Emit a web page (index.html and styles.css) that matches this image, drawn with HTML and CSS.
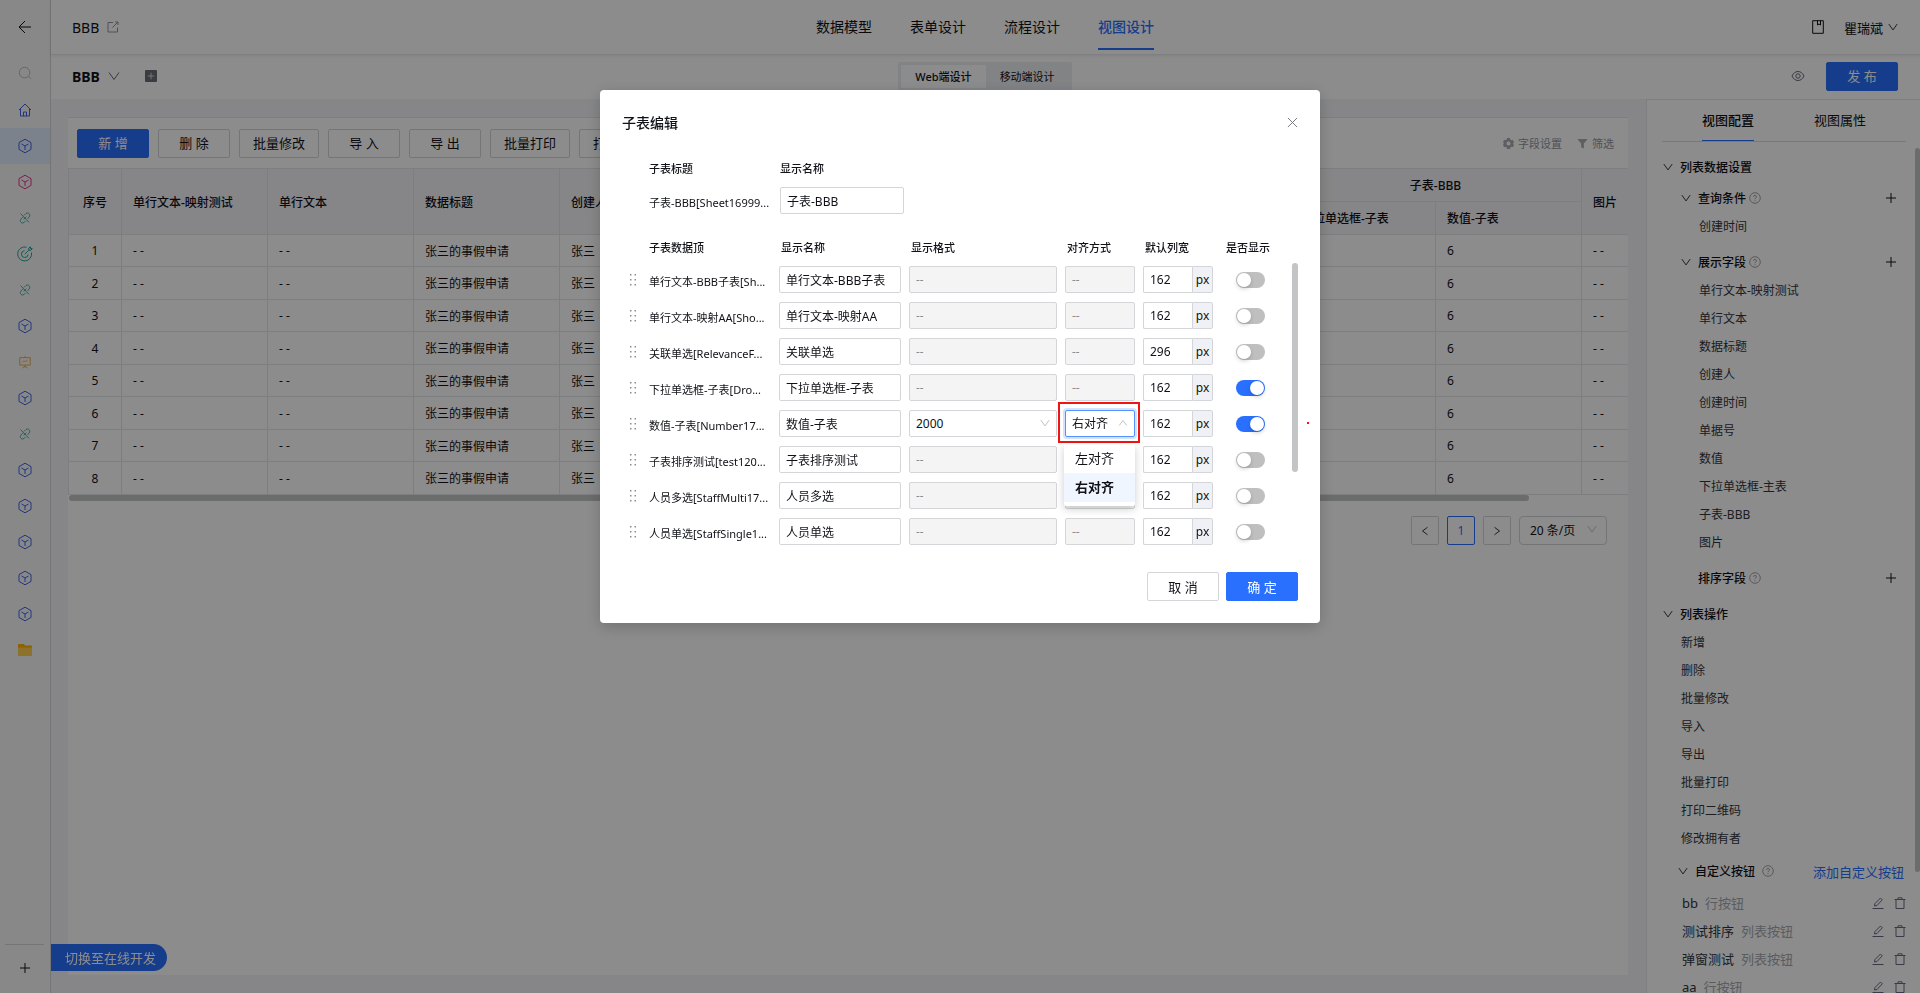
FILE: index.html
```html
<!DOCTYPE html>
<html lang="zh-CN">
<head>
    <meta charset="UTF-8">
    <meta name="viewport" content="width=device-width, initial-scale=1.0">
    <title>视图设计</title>
    <link rel="stylesheet" href="styles.css">
</head>
<body>
    <svg class="sprite" aria-hidden="true">
        <symbol id="i-back" viewBox="0 0 16 16"><path d="M14 8H2M8 2L2 8l6 6"/></symbol>
        <symbol id="i-search" viewBox="0 0 16 16"><circle cx="7.5" cy="7.5" r="6"/><path d="M12 12l3 2.5"/></symbol>
        <symbol id="i-home" viewBox="0 0 16 16"><path d="M2 8l6-6 6 6M3.500 7v7h9V7M6.500 14V10h3v4"/></symbol>
        <symbol id="i-cube" viewBox="0 0 16 16"><path d="M8 1.200l6 3.400v6.800l-6 3.400-6-3.400V4.600zM4.500 6L8 8l3.500-2M8 8v4"/></symbol>
        <symbol id="i-link" viewBox="0 0 16 16"><path d="M3 3l9.500 10M9.500 6.500L6.500 9.500M7 5l2-2c2.500-2 5.500.500 4 3.500L11 9M5.500 7L3.500 9C1 12 4.500 15 7 13l1.500-1.500"/></symbol>
        <symbol id="i-target" viewBox="0 0 16 16"><path d="M14.500 6.500A7 7 0 1 1 9.500 1.200M11.200 8.500A3.400 3.400 0 1 1 7.500 4.700M7.800 8.200l4-4M11.800 4.200V2L13.500.800V2.500H15.200L14 4.200z"/></symbol>
        <symbol id="i-board" viewBox="0 0 16 16"><path d="M2 3h12v8.500H2zM8 1v2M8 11.500V14M5 15l3-2 3 2M5 8.500l2-2 1.500 1.500L11 5.500"/></symbol>
        <symbol id="i-down" viewBox="0 0 12 12"><path d="M1 2.500l5 7 5-7"/></symbol>
        <symbol id="i-up" viewBox="0 0 12 12"><path d="M1.500 9L6 3l4.500 6"/></symbol>
        <symbol id="i-plus" viewBox="0 0 12 12"><path d="M6 1v10M1 6h10"/></symbol>
        <symbol id="i-help" viewBox="0 0 12 12"><circle cx="6" cy="6" r="5.300"/><path d="M4.500 4.800C4.500 3 7.500 3 7.500 4.800 7.500 6 6 5.800 6 7.200M6 8.300v1"/></symbol>
        <symbol id="i-edit" viewBox="0 0 12 12"><path d="M2.500 9l.5-2.500L8.500 1l1.800 1.800L5 8.500zM.500 11.500h11"/></symbol>
        <symbol id="i-trash" viewBox="0 0 12 12"><path d="M.500 2.500h11M4 2.500V.800h4v1.700M2 2.500v9h8v-9"/></symbol>
        <symbol id="i-drag" viewBox="0 0 8 14"><path d="M1 1h1.500v1.500H1zM5.500 1H7v1.500H5.500zM1 6h1.500v1.500H1zM5.500 6H7v1.500H5.500zM1 11h1.500v1.500H1zM5.500 11H7v1.500H5.500z"/></symbol>
    </svg>

    <nav class="sidebar">
        <a href="#" aria-label="返回" class="back"><svg class="icon"><use href="#i-back"/></svg></a>
        <a href="#" aria-label="搜索" class="search"><svg class="icon small"><use href="#i-search"/></svg></a>
        <a href="#" aria-label="首页"><svg class="icon"><use href="#i-home"/></svg></a>
        <a href="#" aria-label="表单" class="active"><svg class="icon"><use href="#i-cube"/></svg></a>
        <a href="#" aria-label="表单" class="pink"><svg class="icon"><use href="#i-cube"/></svg></a>
        <a href="#" aria-label="链接" class="teal"><svg class="icon small"><use href="#i-link"/></svg></a>
        <a href="#" aria-label="目标" class="teal"><svg class="icon"><use href="#i-target"/></svg></a>
        <a href="#" aria-label="链接" class="teal"><svg class="icon small"><use href="#i-link"/></svg></a>
        <a href="#" aria-label="表单"><svg class="icon"><use href="#i-cube"/></svg></a>
        <a href="#" aria-label="报表" class="orange"><svg class="icon small"><use href="#i-board"/></svg></a>
        <a href="#" aria-label="表单"><svg class="icon"><use href="#i-cube"/></svg></a>
        <a href="#" aria-label="链接" class="teal"><svg class="icon small"><use href="#i-link"/></svg></a>
        <a href="#" aria-label="表单"><svg class="icon"><use href="#i-cube"/></svg></a>
        <a href="#" aria-label="表单"><svg class="icon"><use href="#i-cube"/></svg></a>
        <a href="#" aria-label="表单"><svg class="icon"><use href="#i-cube"/></svg></a>
        <a href="#" aria-label="表单"><svg class="icon"><use href="#i-cube"/></svg></a>
        <a href="#" aria-label="表单"><svg class="icon"><use href="#i-cube"/></svg></a>
        <a href="#" aria-label="文件夹">
            <svg class="folder" viewBox="0 0 14 12"><path fill="#ffb400" d="M0 1a1 1 0 0 1 1-1h5l1 1.500h6a1 1 0 0 1 1 1V6H0z"/><path fill="#ffd04d" d="M0 3.500h14V11a1 1 0 0 1-1 1H1a1 1 0 0 1-1-1z"/></svg>
        </a>
        <button type="button" class="add-app" aria-label="添加"><svg class="icon"><use href="#i-plus"/></svg></button>
    </nav>

    <div class="page">
        <header class="topbar">
            <div class="app-name">BBB
                <svg class="ext" viewBox="0 0 12 12"><path d="M6 1.500H1v9.500h9.500V6.500M8 1h3v3M11 1L5.500 6.500"/></svg>
            </div>
            <nav class="main-nav">
                <a href="#">数据模型</a>
                <a href="#">表单设计</a>
                <a href="#">流程设计</a>
                <a href="#" class="active">视图设计</a>
            </nav>
            <div class="user">
                <svg class="book" viewBox="0 0 12 14"><path d="M.700.700h10.600v12.600H.700zM5.500.700V5L7 4l1.500 1V.700"/></svg>
                <span>瞿瑞斌</span>
                <svg class="chev"><use href="#i-down"/></svg>
            </div>
        </header>

        <div class="subbar">
            <div class="view-name">BBB
                <svg class="chev large"><use href="#i-down"/></svg>
                <button type="button" class="add-view" aria-label="新建视图"><svg><use href="#i-plus"/></svg></button>
            </div>
            <div class="segment">
                <button type="button" class="active">Web端设计</button>
                <button type="button">移动端设计</button>
            </div>
            <div class="sub-actions">
                <svg class="eye" viewBox="0 0 14 12"><path d="M1 6c2.500-6 9.500-6 12 0-2.500 6-9.500 6-12 0z"/><circle cx="7" cy="6" r="2.200"/></svg>
                <button type="button" class="btn primary">发 布</button>
            </div>
        </div>

        <div class="content">
            <main class="canvas">
                <div class="toolbar">
                    <button type="button" class="btn primary">新 增</button>
                    <button type="button" class="btn">删 除</button>
                    <button type="button" class="btn">批量修改</button>
                    <button type="button" class="btn">导 入</button>
                    <button type="button" class="btn">导 出</button>
                    <button type="button" class="btn">批量打印</button>
                    <button type="button" class="btn">打印二维码</button>
                    <div class="tools">
                        <a href="#"><svg viewBox="0 0 12 12"><path fill-rule="evenodd" d="M4.500 0h3l.5 1.700 1.200.7 1.500-.4L12 4.500 11 6l1 1.500-1.300 2.500-1.500-.4-1.200.7L7.500 12h-3L4 10.300l-1.200-.7-1.500.4L0 7.500 1 6 0 4.500 1.300 2l1.500.4L4 1.700zM6 3.800a2.200 2.200 0 1 0 0 4.400 2.200 2.200 0 0 0 0-4.400z"/></svg>字段设置</a>
                        <a href="#"><svg viewBox="0 0 12 12"><path d="M1 1h10v1L7.500 6v5.500l-3-1.500V6L1 2z"/></svg>筛选</a>
                    </div>
                </div>

                <div class="table-wrap">
                    <table>
                        <colgroup>
                            <col class="col-no">
                            <col span="11">
                        </colgroup>
                        <thead>
                            <tr>
                                <th rowspan="2" class="no">序号</th>
                                <th rowspan="2">单行文本-映射测试</th>
                                <th rowspan="2">单行文本</th>
                                <th rowspan="2">数据标题</th>
                                <th rowspan="2">创建人</th>
                                <th rowspan="2"></th>
                                <th rowspan="2"></th>
                                <th rowspan="2"></th>
                                <th rowspan="2"></th>
                                <th colspan="2" class="group">子表-BBB</th>
                                <th rowspan="2">图片</th>
                            </tr>
                            <tr>
                                <th>下拉单选框-子表</th>
                                <th>数值-子表</th>
                            </tr>
                        </thead>
                        <tbody>
                            <tr><td class="no">1</td><td>- -</td><td>- -</td><td>张三的事假申请</td><td>张三</td><td></td><td></td><td></td><td></td><td></td><td>6</td><td>- -</td></tr>
                            <tr><td class="no">2</td><td>- -</td><td>- -</td><td>张三的事假申请</td><td>张三</td><td></td><td></td><td></td><td></td><td></td><td>6</td><td>- -</td></tr>
                            <tr><td class="no">3</td><td>- -</td><td>- -</td><td>张三的事假申请</td><td>张三</td><td></td><td></td><td></td><td></td><td></td><td>6</td><td>- -</td></tr>
                            <tr><td class="no">4</td><td>- -</td><td>- -</td><td>张三的事假申请</td><td>张三</td><td></td><td></td><td></td><td></td><td></td><td>6</td><td>- -</td></tr>
                            <tr><td class="no">5</td><td>- -</td><td>- -</td><td>张三的事假申请</td><td>张三</td><td></td><td></td><td></td><td></td><td></td><td>6</td><td>- -</td></tr>
                            <tr><td class="no">6</td><td>- -</td><td>- -</td><td>张三的事假申请</td><td>张三</td><td></td><td></td><td></td><td></td><td></td><td>6</td><td>- -</td></tr>
                            <tr><td class="no">7</td><td>- -</td><td>- -</td><td>张三的事假申请</td><td>张三</td><td></td><td></td><td></td><td></td><td></td><td>6</td><td>- -</td></tr>
                            <tr><td class="no">8</td><td>- -</td><td>- -</td><td>张三的事假申请</td><td>张三</td><td></td><td></td><td></td><td></td><td></td><td>6</td><td>- -</td></tr>
                        </tbody>
                    </table>
                </div>
                <div class="h-scroll"></div>

                <div class="pagination">
                    <button type="button" aria-label="上一页"><svg viewBox="0 0 12 12"><path d="M9 1.500L3 6l6 4.500"/></svg></button>
                    <button type="button" class="active">1</button>
                    <button type="button" aria-label="下一页"><svg viewBox="0 0 12 12"><path d="M3 1.500L9 6l-6 4.500"/></svg></button>
                    <div class="select-box page-size">
                        <select aria-label="每页条数"><option>20 条/页</option></select>
                        <svg><use href="#i-down"/></svg>
                    </div>
                </div>
            </main>

            <aside class="config">
                <div class="config-tabs">
                    <a href="#" class="active">视图配置</a>
                    <a href="#">视图属性</a>
                </div>
                <div class="config-body">
                    <h3><svg class="chev"><use href="#i-down"/></svg>列表数据设置</h3>
                    <section class="nested">
                        <h4><svg class="chev"><use href="#i-down"/></svg>查询条件<svg class="help"><use href="#i-help"/></svg><button type="button" aria-label="添加查询条件"><svg><use href="#i-plus"/></svg></button></h4>
                        <ul>
                            <li>创建时间</li>
                        </ul>
                        <h4><svg class="chev"><use href="#i-down"/></svg>展示字段<svg class="help"><use href="#i-help"/></svg><button type="button" aria-label="添加展示字段"><svg><use href="#i-plus"/></svg></button></h4>
                        <ul>
                            <li>单行文本-映射测试</li>
                            <li>单行文本</li>
                            <li>数据标题</li>
                            <li>创建人</li>
                            <li>创建时间</li>
                            <li>单据号</li>
                            <li>数值</li>
                            <li>下拉单选框-主表</li>
                            <li>子表-BBB</li>
                            <li>图片</li>
                        </ul>
                        <h4 class="plain">排序字段<svg class="help"><use href="#i-help"/></svg><button type="button" aria-label="添加排序字段"><svg><use href="#i-plus"/></svg></button></h4>
                    </section>
                    <h3><svg class="chev"><use href="#i-down"/></svg>列表操作</h3>
                    <ul class="actions">
                        <li>新增</li>
                        <li>删除</li>
                        <li>批量修改</li>
                        <li>导入</li>
                        <li>导出</li>
                        <li>批量打印</li>
                        <li>打印二维码</li>
                        <li>修改拥有者</li>
                    </ul>
                    <h4 class="custom"><svg class="chev"><use href="#i-down"/></svg>自定义按钮<svg class="help"><use href="#i-help"/></svg><a href="#">添加自定义按钮</a></h4>
                    <ul class="custom-list">
                        <li>bb <em>行按钮</em><button type="button" aria-label="编辑"><svg><use href="#i-edit"/></svg></button><button type="button" aria-label="删除"><svg><use href="#i-trash"/></svg></button></li>
                        <li>测试排序 <em>列表按钮</em><button type="button" aria-label="编辑"><svg><use href="#i-edit"/></svg></button><button type="button" aria-label="删除"><svg><use href="#i-trash"/></svg></button></li>
                        <li>弹窗测试 <em>列表按钮</em><button type="button" aria-label="编辑"><svg><use href="#i-edit"/></svg></button><button type="button" aria-label="删除"><svg><use href="#i-trash"/></svg></button></li>
                        <li>aa <em>行按钮</em><button type="button" aria-label="编辑"><svg><use href="#i-edit"/></svg></button><button type="button" aria-label="删除"><svg><use href="#i-trash"/></svg></button></li>
                    </ul>
                </div>
                <div class="config-scroll"></div>
            </aside>
        </div>
    </div>

    <button type="button" class="switch-dev">切换至在线开发</button>

    <div class="mask">
        <div class="modal" role="dialog" aria-labelledby="modal-title">
            <div class="modal-head">
                <h2 id="modal-title">子表编辑</h2>
                <button type="button" class="close" aria-label="关闭"><svg viewBox="0 0 12 12"><path d="M1 1l10 10M11 1L1 11"/></svg></button>
            </div>

            <div class="sheet-title">
                <span class="head">子表标题</span>
                <span class="head">显示名称</span>
                <label for="sheet-name">子表-BBB[Sheet16999...</label>
                <input type="text" id="sheet-name" value="子表-BBB">
            </div>

            <div class="fields">
                <div class="field-list">
                    <div class="row head-row">
                        <span></span>
                        <span>子表数据顶</span>
                        <span>显示名称</span>
                        <span>显示格式</span>
                        <span>对齐方式</span>
                        <span>默认列宽</span>
                        <span>是否显示</span>
                    </div>
                    <div class="row">
                        <svg class="drag"><use href="#i-drag"/></svg>
                        <label for="f1">单行文本-BBB子表[Sh...</label>
                        <input type="text" id="f1" value="单行文本-BBB子表">
                        <input type="text" value="--" aria-label="显示格式" disabled>
                        <input type="text" value="--" aria-label="对齐方式" disabled>
                        <div class="width-box"><input type="text" value="162" aria-label="默认列宽"><span>px</span></div>
                        <input type="checkbox" class="switch" aria-label="是否显示">
                    </div>
                    <div class="row">
                        <svg class="drag"><use href="#i-drag"/></svg>
                        <label for="f2">单行文本-映射AA[Sho...</label>
                        <input type="text" id="f2" value="单行文本-映射AA">
                        <input type="text" value="--" aria-label="显示格式" disabled>
                        <input type="text" value="--" aria-label="对齐方式" disabled>
                        <div class="width-box"><input type="text" value="162" aria-label="默认列宽"><span>px</span></div>
                        <input type="checkbox" class="switch" aria-label="是否显示">
                    </div>
                    <div class="row">
                        <svg class="drag"><use href="#i-drag"/></svg>
                        <label for="f3">关联单选[RelevanceF...</label>
                        <input type="text" id="f3" value="关联单选">
                        <input type="text" value="--" aria-label="显示格式" disabled>
                        <input type="text" value="--" aria-label="对齐方式" disabled>
                        <div class="width-box"><input type="text" value="296" aria-label="默认列宽"><span>px</span></div>
                        <input type="checkbox" class="switch" aria-label="是否显示">
                    </div>
                    <div class="row">
                        <svg class="drag"><use href="#i-drag"/></svg>
                        <label for="f4">下拉单选框-子表[Dro...</label>
                        <input type="text" id="f4" value="下拉单选框-子表">
                        <input type="text" value="--" aria-label="显示格式" disabled>
                        <input type="text" value="--" aria-label="对齐方式" disabled>
                        <div class="width-box"><input type="text" value="162" aria-label="默认列宽"><span>px</span></div>
                        <input type="checkbox" class="switch" aria-label="是否显示" checked>
                    </div>
                    <div class="row">
                        <svg class="drag"><use href="#i-drag"/></svg>
                        <label for="f5">数值-子表[Number17...</label>
                        <input type="text" id="f5" value="数值-子表">
                        <div class="select-box">
                            <select aria-label="显示格式"><option>2000</option></select>
                            <svg><use href="#i-down"/></svg>
                        </div>
                        <div class="select-box open">
                            <select aria-label="对齐方式"><option>右对齐</option></select>
                            <svg><use href="#i-up"/></svg>
                            <span class="mark"></span>
                            <ul class="dropdown">
                                <li>左对齐</li>
                                <li class="selected">右对齐</li>
                            </ul>
                        </div>
                        <div class="width-box"><input type="text" value="162" aria-label="默认列宽"><span>px</span></div>
                        <input type="checkbox" class="switch" aria-label="是否显示" checked>
                    </div>
                    <div class="row">
                        <svg class="drag"><use href="#i-drag"/></svg>
                        <label for="f6">子表排序测试[test120...</label>
                        <input type="text" id="f6" value="子表排序测试">
                        <input type="text" value="--" aria-label="显示格式" disabled>
                        <input type="text" value="" aria-label="对齐方式" disabled>
                        <div class="width-box"><input type="text" value="162" aria-label="默认列宽"><span>px</span></div>
                        <input type="checkbox" class="switch" aria-label="是否显示">
                    </div>
                    <div class="row">
                        <svg class="drag"><use href="#i-drag"/></svg>
                        <label for="f7">人员多选[StaffMulti17...</label>
                        <input type="text" id="f7" value="人员多选">
                        <input type="text" value="--" aria-label="显示格式" disabled>
                        <input type="text" value="" aria-label="对齐方式" disabled>
                        <div class="width-box"><input type="text" value="162" aria-label="默认列宽"><span>px</span></div>
                        <input type="checkbox" class="switch" aria-label="是否显示">
                    </div>
                    <div class="row">
                        <svg class="drag"><use href="#i-drag"/></svg>
                        <label for="f8">人员单选[StaffSingle1...</label>
                        <input type="text" id="f8" value="人员单选">
                        <input type="text" value="--" aria-label="显示格式" disabled>
                        <input type="text" value="--" aria-label="对齐方式" disabled>
                        <div class="width-box"><input type="text" value="162" aria-label="默认列宽"><span>px</span></div>
                        <input type="checkbox" class="switch" aria-label="是否显示">
                    </div>
                </div>
                <div class="v-scroll"></div>
            </div>

            <div class="modal-foot">
                <button type="button" class="btn">取 消</button>
                <button type="button" class="btn primary">确 定</button>
            </div>
            <span class="dot"></span>
        </div>
    </div>
</body>
</html>
```
FILE: styles.css
```css
* {
    box-sizing: border-box;
}

body {
    margin: 0;
    height: 100vh;
    display: flex;
    overflow: hidden;
    font-family: "Noto Sans", "Noto Sans CJK SC", sans-serif;
    font-size: 12px;
    color: #111218;
    background: #f4f5f8;
}

a {
    color: inherit;
    text-decoration: none;
}

ul, h2, h3, h4 {
    margin: 0;
    padding: 0;
    list-style: none;
}

button, input, select {
    font-family: inherit;
    font-size: inherit;
    color: inherit;
    margin: 0;
}

button {
    padding: 0;
    border: none;
    background: none;
    cursor: pointer;
}

svg {
    flex: none;
    width: 12px;
    height: 12px;
    fill: none;
    stroke: currentColor;
}

.sprite {
    position: absolute;
    width: 0;
    height: 0;
}

.icon {
    width: 16px;
    height: 16px;
}

.icon.small {
    width: 14px;
    height: 14px;
}

.btn {
    min-width: 72px;
    height: 29px;
    padding: 0 13px;
    border: 1px solid #d4d5d9;
    border-radius: 2px;
    background: white;
    font-size: 13px;
    line-height: 26px;
    white-space: nowrap;
}

.btn.primary {
    background: #2970ff;
    border-color: #2970ff;
    color: white;
}

/* left icon bar */
.sidebar {
    flex: none;
    display: flex;
    flex-direction: column;
    width: 51px;
    border-right: 1px solid #d4d5d9;
    background: #f7f7f8;
    color: #4262e8;
}

.sidebar a {
    display: flex;
    flex: none;
    align-items: center;
    justify-content: center;
    height: 36px;
}

.sidebar .back {
    height: 54px;
    color: #111218;
}

.sidebar .search {
    height: 38px;
    color: #b0b2b8;
}

.sidebar .active {
    background: #e2edff;
}

.sidebar .pink {
    color: #e8368c;
}

.sidebar .teal {
    color: #2aa79b;
}

.sidebar .orange {
    color: #efa23a;
}

.folder {
    width: 14px;
    height: 12px;
    stroke: none;
}

.add-app {
    height: 49px;
    margin: auto 6px 0 5px;
    border-top: 1px solid #d4d5d9;
    color: #111218;
}

.add-app svg {
    width: 12px;
    height: 12px;
}

/* header */
.page {
    flex: 1;
    min-width: 0;
    display: flex;
    flex-direction: column;
}

.topbar, .subbar {
    flex: none;
    display: grid;
    grid-template-columns: 1fr auto 1fr;
    align-items: center;
    padding: 0 22px 0 21px;
    background: white;
}

.topbar {
    height: 55px;
    border-bottom: 1px solid #e6e7ea;
    box-shadow: 0 1px 3px rgba(0, 0, 0, 0.08);
    z-index: 1;
}

.app-name, .view-name {
    display: flex;
    align-items: center;
    gap: 8px;
    font-size: 14px;
}

.ext {
    color: #92959e;
}

.main-nav {
    display: flex;
    gap: 38px;
    height: 54px;
    font-size: 14px;
}

.main-nav a {
    height: 50px;
    line-height: 54px;
}

.main-nav .active {
    color: #2970ff;
    font-weight: 500;
    border-bottom: 2px solid #2970ff;
}

.user, .sub-actions {
    display: flex;
    align-items: center;
    justify-content: flex-end;
    gap: 5px;
    font-size: 13px;
}

.user .book {
    height: 14px;
    margin-right: 15px;
}

.chev {
    width: 10px;
    height: 10px;
}

.chev.large {
    width: 12px;
    height: 12px;
    color: #686b75;
}

.subbar {
    height: 44px;
    padding-bottom: 2px;
}

.view-name {
    font-weight: 700;
}

.add-view {
    display: flex;
    width: 12px;
    height: 12px;
    margin-left: 17px;
    border-radius: 1px;
    background: #6b6e78;
    color: white;
}

.add-view svg {
    padding: 2px;
}

.segment {
    display: flex;
    padding: 3px;
    border-radius: 2px;
    background: #eceef3;
    font-size: 11px;
}

.segment button {
    height: 23px;
    padding: 0 14px;
}

.segment .active {
    background: white;
    font-weight: 500;
}

.eye {
    width: 14px;
    margin-right: 16px;
    color: #686b75;
}

/* page canvas */
.content {
    flex: 1;
    min-height: 0;
    display: flex;
}

.canvas {
    flex: 1;
    min-width: 0;
    margin: 18px 18px 18px 17px;
    border-top: 1px solid #e4e5e8;
    background: white;
}

.toolbar {
    display: flex;
    align-items: center;
    gap: 9px;
    height: 50px;
    padding: 0 14px 0 9px;
}

.tools {
    display: flex;
    gap: 15px;
    margin-left: auto;
    font-size: 11px;
    color: #92959e;
}

.tools a {
    display: flex;
    align-items: center;
    gap: 4px;
}

.tools svg {
    width: 11px;
    height: 11px;
    fill: #abadb3;
    stroke: none;
}

.table-wrap {
    overflow: hidden;
}

table {
    width: 1659px;
    table-layout: fixed;
    border-collapse: collapse;
}

col {
    width: 146px;
}

.col-no {
    width: 53px;
}

th, td {
    height: 33px;
    padding: 0 11px;
    border: 1px solid #e4e5e8;
    text-align: left;
    white-space: nowrap;
}

tbody tr:nth-child(odd) td {
    height: 32px;
}

th {
    background: #f5f5f8;
    font-weight: 500;
}

.no, .group {
    text-align: center;
}

.h-scroll {
    height: 6px;
    margin: 0 99px 0 1px;
    border-radius: 3px;
    background: #c3c6c5;
}

.pagination {
    display: flex;
    justify-content: flex-end;
    gap: 8px;
    padding: 15px 21px 0 0;
}

.pagination button {
    display: flex;
    align-items: center;
    justify-content: center;
    width: 28px;
    height: 29px;
    border: 1px solid #d4d5d9;
    border-radius: 2px;
}

.pagination button svg {
    width: 10px;
    height: 10px;
}

.pagination .active {
    border-color: #2970ff;
    color: #2970ff;
}

/* selects and inputs */
input[type="text"], select {
    width: 100%;
    min-width: 0;
    height: 27px;
    padding: 0 6px;
    border: 1px solid #d4d5d9;
    border-radius: 2px;
    background: white;
    outline: none;
}

input[type="text"]:disabled {
    background: #f4f4f4;
    color: #8b8d94;
}

select {
    appearance: none;
}

.select-box {
    position: relative;
}

.select-box > svg {
    position: absolute;
    right: 7px;
    top: 8px;
    width: 10px;
    height: 10px;
    color: #b4b6bc;
}

.page-size {
    width: 88px;
}

.page-size select {
    height: 29px;
    padding: 0 10px;
    border-radius: 4px;
}

.page-size > svg {
    right: 10px;
}

/* right config panel */
.config {
    flex: none;
    position: relative;
    width: 274px;
    border-left: 1px solid #e4e5e8;
    border-top: 1px solid #e4e5e8;
    background: white;
    overflow: hidden;
}

.config-tabs {
    display: flex;
    justify-content: center;
    gap: 60px;
    margin: 0 14px 0 15px;
    border-bottom: 1px solid #dcdde0;
    font-size: 13px;
    line-height: 40px;
}

.config-tabs .active {
    font-weight: 500;
    border-bottom: 1px solid #2970ff;
}

.config-body {
    padding: 9px 14px 0 16px;
}

.config h3, .config h4 {
    display: flex;
    align-items: center;
    gap: 7px;
    height: 31px;
    font-size: 12px;
    font-weight: 500;
}

.help {
    margin-left: -4px;
    color: #a0a3aa;
}

.config h4 button {
    display: flex;
    margin: 0 9px 0 auto;
}

.config ul {
    padding-left: 18px;
}

.config li {
    height: 28px;
    line-height: 28px;
    color: #33353d;
}

.nested {
    padding-left: 18px;
}

.nested ul {
    margin-bottom: 5px;
}

.config .plain {
    padding-left: 17px;
    margin-bottom: 5px;
}

.config .custom {
    height: 36px;
    padding-left: 15px;
}

.config .custom .help {
    margin-left: 0;
}

.custom a {
    margin: 0 2px 0 auto;
    font-size: 13px;
    font-weight: 400;
    color: #2970ff;
}

.config .custom-list {
    padding: 0 0 0 19px;
    font-size: 13px;
}

.custom-list li {
    display: flex;
    align-items: center;
    gap: 7px;
}

.custom-list em {
    margin-right: auto;
    font-style: normal;
    color: #a5a8b0;
}

.custom-list button {
    display: flex;
    margin-left: 3px;
    color: #686b85;
}

.config-scroll {
    position: absolute;
    top: 48px;
    right: 0;
    width: 5px;
    height: 724px;
    border-radius: 3px;
    background: #c3c6c5;
}

.switch-dev {
    position: fixed;
    left: 51px;
    bottom: 22px;
    height: 27px;
    padding: 0 11px 0 14px;
    border-radius: 0 14px 14px 0;
    background: #2970ff;
    color: white;
    font-size: 13px;
    line-height: 26px;
    z-index: 2;
}

/* modal */
.mask {
    position: fixed;
    inset: 0;
    padding-top: 90px;
    background: rgba(0, 0, 0, 0.45);
    z-index: 10;
}

.modal {
    position: relative;
    width: 720px;
    margin: 0 auto;
    padding: 0 22px 22px;
    border-radius: 4px;
    background: white;
    box-shadow: 0 4px 16px rgba(0, 0, 0, 0.2);
}

.modal-head {
    display: flex;
    align-items: center;
    justify-content: space-between;
    height: 66px;
    padding-bottom: 2px;
}

.modal-head h2 {
    font-size: 14px;
    font-weight: 500;
}

.close {
    display: flex;
    color: #6f7178;
}

.close svg {
    width: 11px;
    height: 11px;
}

.sheet-title {
    display: grid;
    grid-template-columns: 123px 124px;
    column-gap: 8px;
    row-gap: 5px;
    margin-left: 27px;
    line-height: 26px;
}

.head, .head-row {
    font-size: 11px;
    font-weight: 500;
}

.sheet-title label, .row label {
    height: 27px;
    font-size: 11px;
    line-height: 31px;
    white-space: nowrap;
}

.fields {
    display: flex;
    gap: 13px;
    margin-top: 16px;
}

.field-list {
    flex: 1;
    margin-left: 6px;
}

.row {
    display: grid;
    grid-template-columns: 13px 122px 122px 148px 70px 70px 58px;
    column-gap: 8px;
    height: 36px;
    align-items: start;
}

.head-row {
    line-height: 36px;
}

.head-row span:nth-child(n+3) {
    padding-left: 2px;
}

.head-row span:last-child {
    padding-left: 5px;
}

.drag {
    width: 8px;
    height: 14px;
    margin: 7px 0 0 1px;
    fill: #8b8d94;
    stroke: none;
}

.width-box {
    display: flex;
}

.width-box input[type="text"] {
    border-radius: 2px 0 0 2px;
    border-right: none;
}

.width-box span {
    flex: none;
    width: 21px;
    height: 27px;
    border: 1px solid #d4d5d9;
    border-radius: 0 2px 2px 0;
    background: #f0f1f6;
    line-height: 26px;
    text-align: center;
}

.switch {
    appearance: none;
    width: 29px;
    height: 16px;
    margin: 6px auto 0;
    padding: 1px;
    border-radius: 8px;
    background: #bfbfbf;
}

.switch::before {
    content: "";
    display: block;
    width: 14px;
    height: 14px;
    border-radius: 50%;
    background: white;
    box-shadow: 0 2px 4px rgba(0, 35, 11, 0.2);
}

.switch:checked {
    background: #2970ff;
}

.switch:checked::before {
    margin-left: auto;
}

.open select {
    border-color: #5291ff;
    box-shadow: 0 0 0 2px rgba(41, 112, 255, 0.2);
}

.mark {
    position: absolute;
    inset: -8px -5px -6px -7px;
    border: 2px solid #f01414;
    pointer-events: none;
}

.dropdown {
    position: absolute;
    top: 34px;
    left: -1px;
    right: 0;
    padding-bottom: 4px;
    border-radius: 2px;
    background: white;
    box-shadow: 0 3px 8px rgba(0, 0, 0, 0.2);
    font-size: 13px;
    line-height: 29px;
    z-index: 1;
}

.dropdown li {
    padding-left: 11px;
}

.dropdown .selected {
    background: #eff6ff;
    font-weight: 700;
}

.v-scroll {
    width: 6px;
    height: 209px;
    margin-top: 33px;
    border-radius: 3px;
    background: #c3c4c5;
}

.modal-foot {
    display: flex;
    justify-content: flex-end;
    gap: 7px;
    margin-top: 18px;
}

.dot {
    position: absolute;
    right: 11px;
    top: 332px;
    width: 2px;
    height: 2px;
    background: #f01414;
}
```
